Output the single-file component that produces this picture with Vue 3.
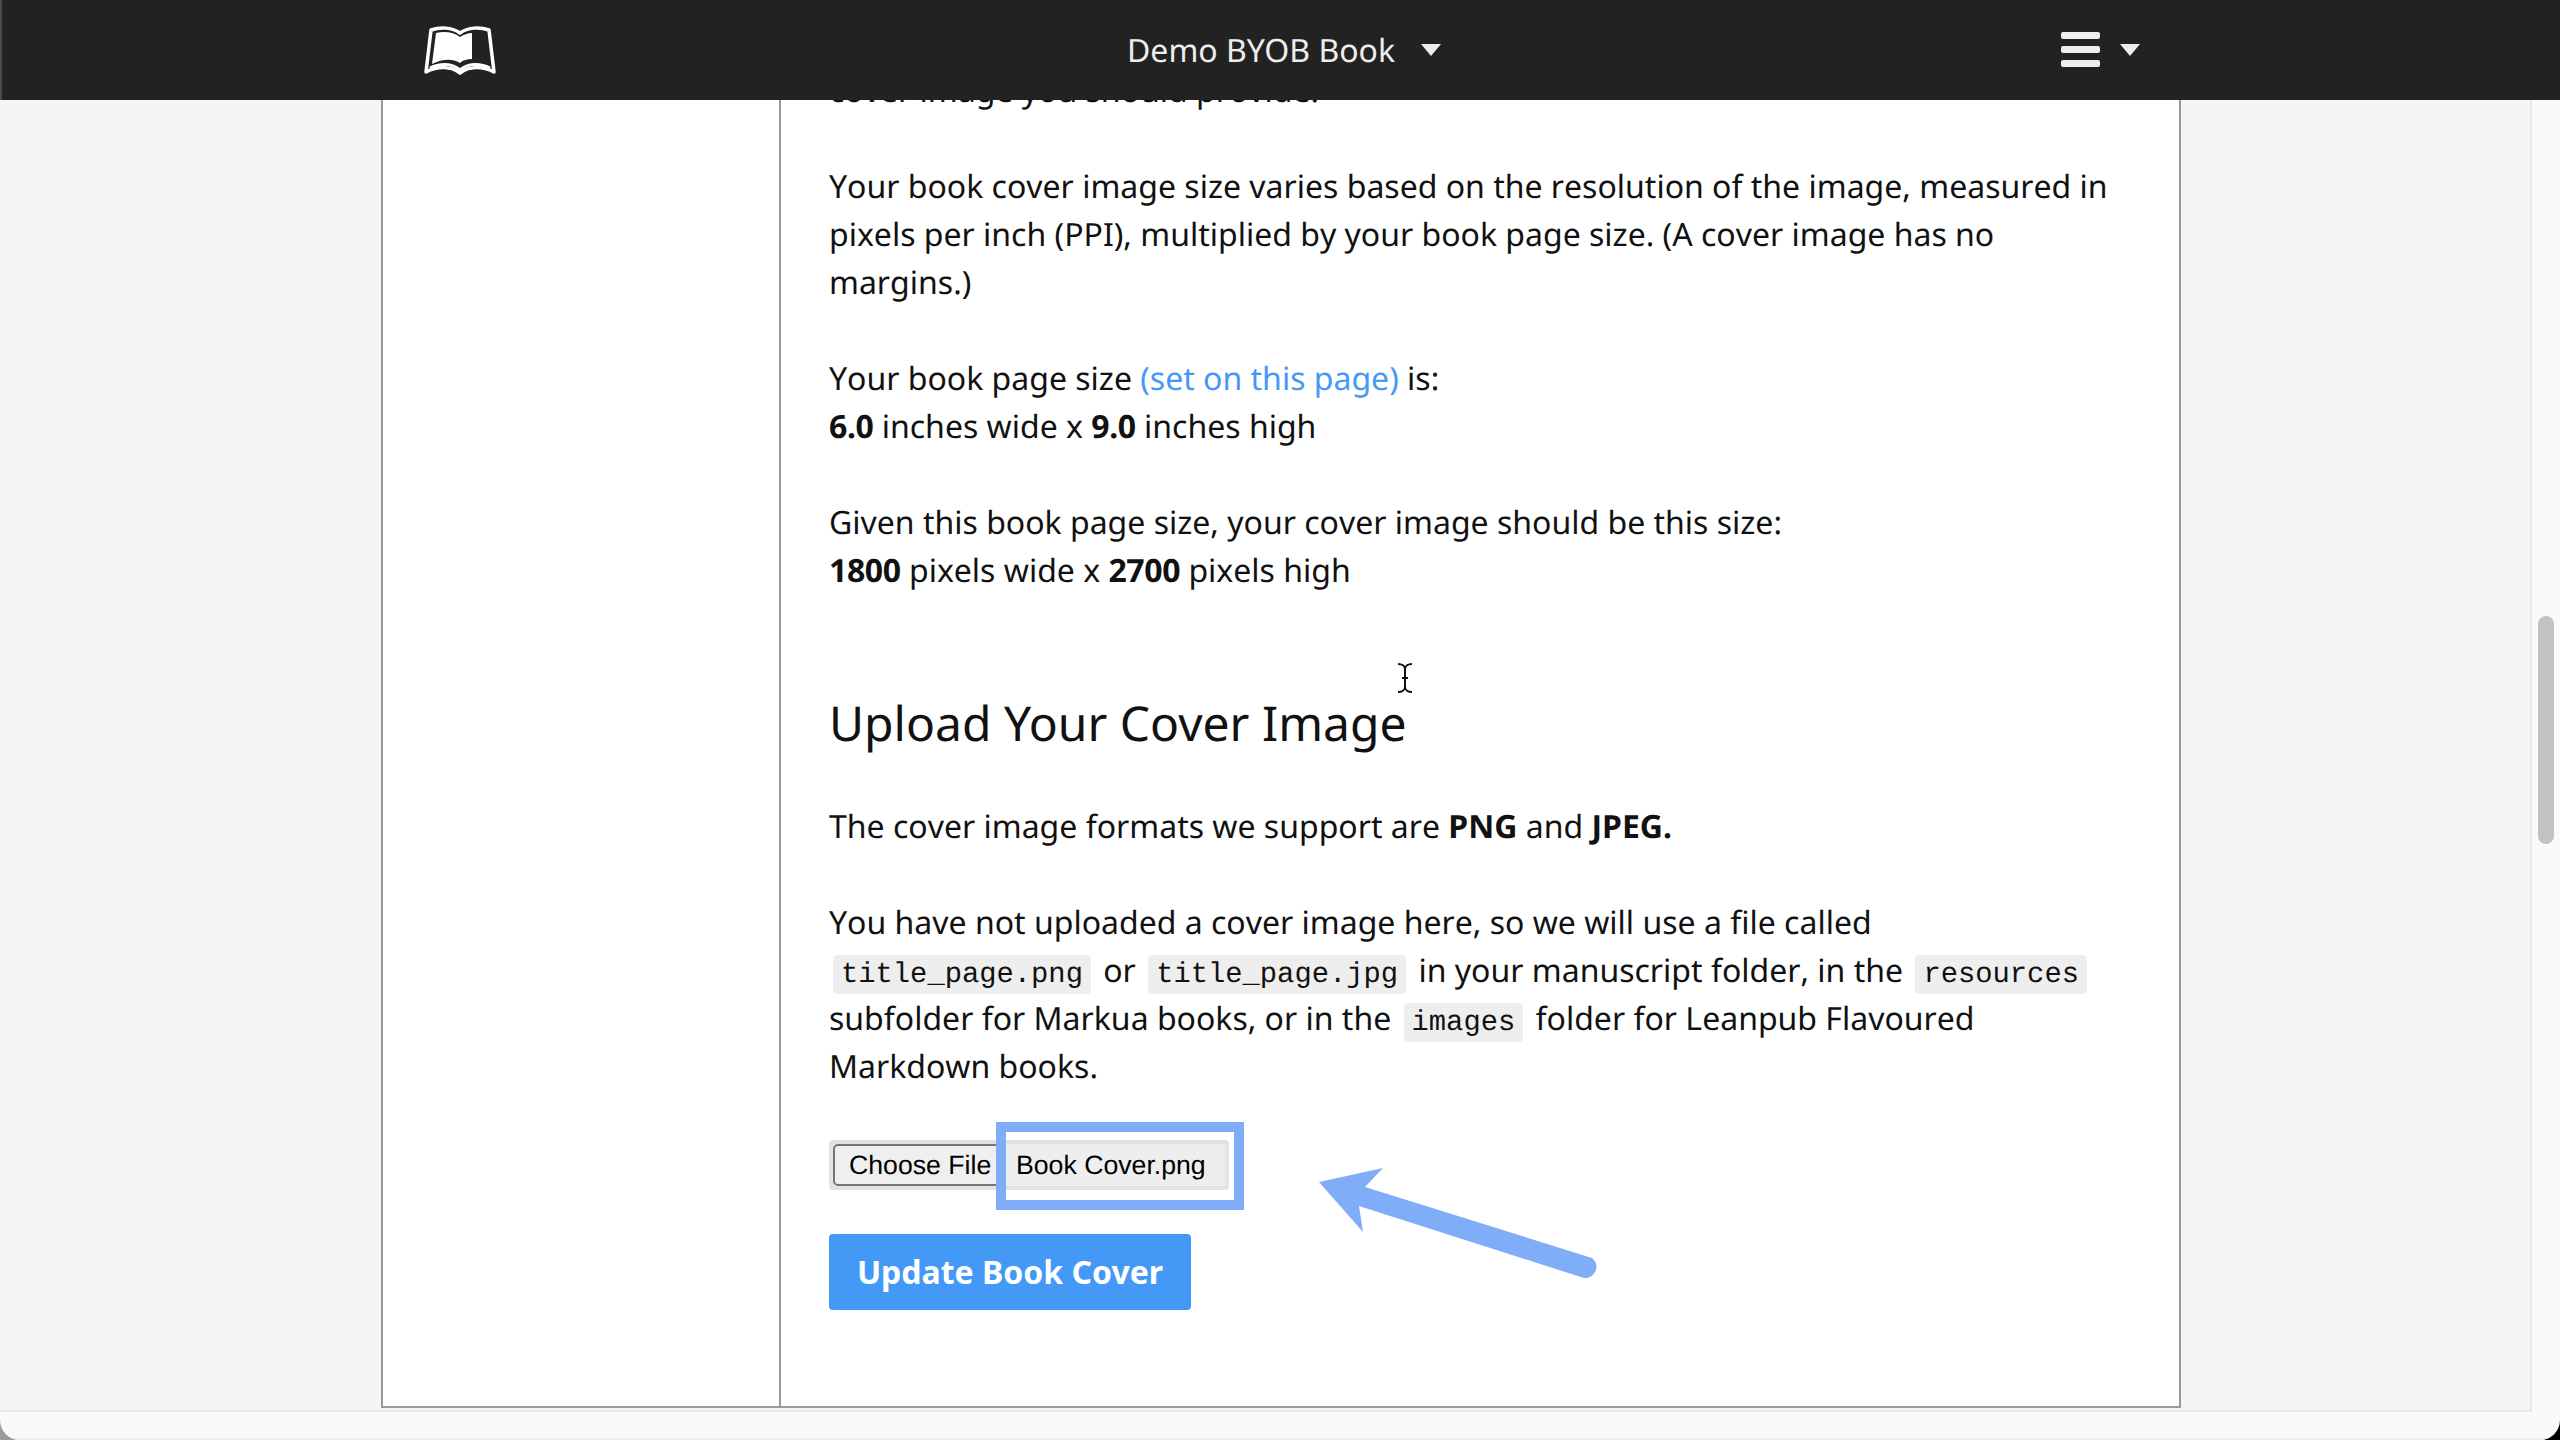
<script setup>
const title = 'Demo BYOB Book'
</script>

<template>
  <div class="screen">
    <div class="upper">
      <div class="page">
        <div class="frame">
          <aside class="side"></aside>
          <main class="main">
            <p>cover image you should provide.</p>
            <p>Your book cover image size varies based on the resolution of the image, measured in pixels per inch (PPI), multiplied by your book page size. (A cover image has no margins.)</p>
            <p>Your book page size <a class="link">(set on this page)</a> is:<br><b class="num">6.0</b> inches wide x <b class="num">9.0</b> inches high</p>
            <p>Given this book page size, your cover image should be this size:<br><b class="num">1800</b> pixels wide x <b class="num">2700</b> pixels high</p>
            <h2>Upload Your Cover Image</h2>
            <p>The cover image formats we support are <b>PNG</b> and <b>JPEG.</b></p>
            <p>You have not uploaded a cover image here, so we will use a file called <code>title_page.png</code> or <code>title_page.jpg</code> in your manuscript folder, in the <code>resources</code> subfolder for Markua books, or in the <code>images</code> folder for Leanpub Flavoured Markdown books.</p>
            <div class="file-row">
              <div class="file">
                <span class="file-btn">Choose File</span>
                <span class="file-name">Book Cover.png</span>
              </div>
              <div class="highlight"></div>
              <svg class="arrow" width="290" height="120" viewBox="1310 1160 290 120">
                <path d="M1319 1182 L1383 1168 L1365 1187 L1592 1258 Q1598 1263 1596 1270 Q1592 1279 1584 1278 L1359 1206 L1363 1232 Z" fill="#7fadf7"/>
              </svg>
            </div>
            <button class="update">Update Book Cover</button>
          </main>
        </div>
      </div>
      <div class="vrail"><div class="thumb"></div></div>
    </div>
    <div class="hrail"></div>

    <header class="topbar">
      <svg class="logo" width="70" height="48" viewBox="0 0 70 48" fill="none" stroke="#fff" stroke-linejoin="round">
        <path d="M35 7 C27 1 15 1 6 4 L1 46 C13 40 26 40 35 47 C44 40 57 40 69 46 L64 4 C55 1 43 1 35 7 Z" stroke-width="3.5"/>
        <path d="M11 7 C19 5 29 6 35 11 C38 9 43 7 47 7 L47 33 C42 33 38 34 35 37 C27 32 17 33 7 38 Z" fill="#fff" stroke="none"/>
        <path d="M5 42 C15 37 27 37 35 44 C43 37 55 37 65 42" stroke-width="3"/>
      </svg>
      <div class="book">
        <span>{{ title }}</span>
        <i class="caret"></i>
      </div>
      <div class="menu">
        <div class="burger"><i></i><i></i><i></i></div>
        <i class="caret"></i>
      </div>
    </header>

    <svg class="ibeam" width="16" height="32" viewBox="0 0 16 32" fill="none" stroke="#111" stroke-width="2">
      <path d="M1 2 C5 2 8 4 8 7 C8 4 11 2 15 2 M8 7 V25 M1 30 C5 30 8 28 8 25 C8 28 11 30 15 30 M5 16 H11"/>
    </svg>
  </div>
</template>

<style>
html, body { margin: 0; background: linear-gradient(to right, #9a9a9a 50%, #000 50%); }
</style>

<style scoped>
.screen {
  position: relative;
  width: 2560px;
  height: 1440px;
  overflow: hidden;
  background: #fafafa;
  border-radius: 0 0 20px 20px;
  font-family: "Noto Sans", sans-serif;
  text-rendering: geometricPrecision;
  color: #111;
}
.upper { display: flex; height: 1412px; }
.page {
  height: 1410px;
  background: #f5f5f5;
  border-right: 2px solid #e8e8e8;
  border-bottom: 2px solid #e8e8e8;
  padding-left: 381px;
  box-sizing: content-box;
  width: 2149px;
  overflow: hidden;
}
.frame {
  display: flex;
  width: 1800px;
  height: 1408px;
  box-sizing: border-box;
  border: solid #999;
  border-width: 0 2px 2px 2px;
  background: #fff;
}
.side { width: 396px; flex: none; border-right: 2px solid #999; }
.main {
  flex: 1;
  padding: 67px 48px 0 48px;
  font-size: 32px;
  line-height: 48px;
  font-kerning: none;
}
p { margin: 0 0 48px; }
b { font-weight: 700; }
.num { letter-spacing: -0.4px; }
.link { color: #4499f7; }
h2 {
  margin: 93px 0 43px;
  font-size: 48px;
  line-height: 72px;
  font-weight: 400;
  font-kerning: normal;
}
code {
  font-family: "Liberation Mono", monospace;
  font-size: 28.8px;
  line-height: 1;
  background: #eee;
  border-radius: 4px;
  padding: 3px 8px;
  margin: 0 4px;
}
.file-row { position: relative; margin-top: 49px; height: 50px; }
.file {
  display: flex;
  align-items: center;
  width: 400px;
  height: 50px;
  box-sizing: border-box;
  background: #eee;
  border: 4px solid #e2e2e2;
  border-radius: 4px;
  font-family: "Liberation Sans", sans-serif;
  font-size: 26.67px;
  font-kerning: normal;
  color: #000;
}
.file-btn {
  box-sizing: border-box;
  width: 173px;
  height: 42px;
  padding-left: 14px;
  line-height: 38px;
  border: 2px solid #767676;
  border-radius: 5px;
  background: #efefef;
  white-space: nowrap;
}
.file-name { margin-left: 10px; white-space: nowrap; }
.highlight {
  position: absolute;
  left: 167px;
  top: -18px;
  width: 248px;
  height: 88px;
  box-sizing: border-box;
  border: 10px solid #7fadf7;
}
.arrow { position: absolute; left: 481px; top: 20px; }
.update {
  display: block;
  margin: 44px 0 0;
  width: 362px;
  height: 76px;
  border: 0;
  border-radius: 4px;
  background: #4499f7;
  color: #fff;
  font-family: "Noto Sans", sans-serif;
  font-size: 32px;
  font-weight: 700;
  font-kerning: normal;
  padding: 0 0 2px;
}
.vrail { position: relative; flex: 1; }
.thumb {
  position: absolute;
  left: 6px;
  top: 616px;
  width: 16px;
  height: 228px;
  border-radius: 8px;
  background: #c2c2c2;
}
.hrail { height: 26px; border-bottom: 2px solid #eee; }
.topbar {
  position: absolute;
  top: 0;
  left: 0;
  right: 0;
  height: 100px;
  background: #222;
  color: #eee;
  border-left: 2px solid #4a4a4a;
  box-sizing: border-box;
}
.logo { position: absolute; left: 423px; top: 26px; overflow: visible; }
.book {
  position: absolute;
  left: 1125px;
  top: 0;
  height: 100px;
  display: flex;
  align-items: center;
  gap: 26px;
  font-size: 32px;
}
.caret {
  display: block;
  width: 0;
  height: 0;
  border-left: 10px solid transparent;
  border-right: 10px solid transparent;
  border-top: 12px solid #eee;
}
.menu {
  position: absolute;
  left: 2059px;
  top: 32px;
  display: flex;
  align-items: center;
  gap: 20px;
}
.burger { display: flex; flex-direction: column; gap: 7px; width: 39px; }
.burger i { display: block; height: 7px; border-radius: 2px; background: #eee; }
.ibeam { position: absolute; left: 1397px; top: 662px; }
</style>
